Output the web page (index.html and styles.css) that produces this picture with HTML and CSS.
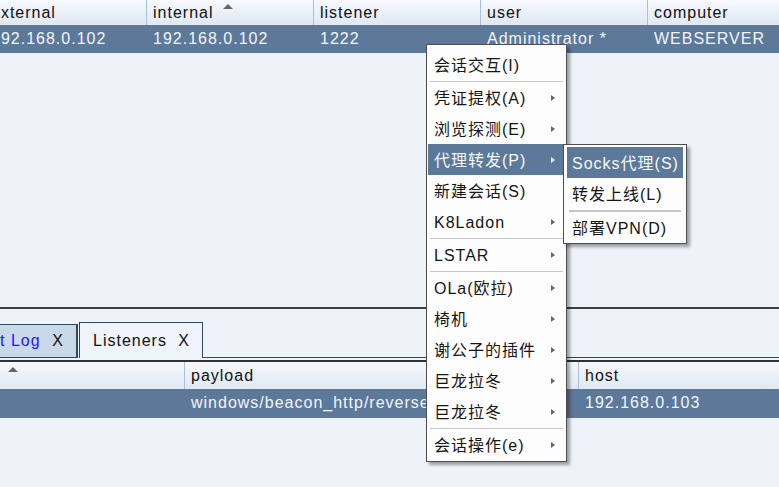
FILE: index.html
```html
<!DOCTYPE html>
<html lang="en">
<head>
    <meta charset="UTF-8">
    <title>Sessions</title>
    <link rel="stylesheet" href="styles.css">
</head>
<body>
    <!-- Sessions table -->
    <div class="top-pane">
        <div class="grid sessions">
            <div class="grid-head">
                <div class="cell first">external</div>
                <div class="cell">internal <span class="sort"></span></div>
                <div class="cell">listener</div>
                <div class="cell">user</div>
                <div class="cell">computer</div>
            </div>
            <div class="grid-row selected">
                <div class="cell first">192.168.0.102</div>
                <div class="cell">192.168.0.102</div>
                <div class="cell">1222</div>
                <div class="cell">Administrator *</div>
                <div class="cell">WEBSERVER</div>
            </div>
        </div>
    </div>

    <div class="split"></div>

    <!-- Tabs + listeners table -->
    <div class="bottom-pane">
        <div class="tabs">
            <div class="tab inactive"><span class="tab-title">t Log</span><span class="tab-close">X</span></div>
            <div class="tab active"><span class="tab-title">Listeners</span><span class="tab-close">X</span></div>
            <div class="tab-rest"></div>
        </div>
        <div class="grid listeners">
            <div class="grid-head">
                <div class="cell name"><span class="sort"></span></div>
                <div class="cell payload">payload</div>
                <div class="cell last">host</div>
            </div>
            <div class="grid-row selected">
                <div class="cell name"></div>
                <div class="cell payload">windows/beacon_http/reverse_http</div>
                <div class="cell last">192.168.0.103</div>
            </div>
        </div>
    </div>

    <!-- Context menu -->
    <div class="menu main-menu">
        <div class="item">会话交互(I)</div>
        <div class="sep"></div>
        <div class="item sub">凭证提权(A)</div>
        <div class="item sub">浏览探测(E)</div>
        <div class="item sub active">代理转发(P)</div>
        <div class="item">新建会话(S)</div>
        <div class="item sub">K8Ladon</div>
        <div class="sep"></div>
        <div class="item sub">LSTAR</div>
        <div class="sep"></div>
        <div class="item sub">OLa(欧拉)</div>
        <div class="item sub">椅机</div>
        <div class="item sub">谢公子的插件</div>
        <div class="item sub">巨龙拉冬</div>
        <div class="item sub">巨龙拉冬</div>
        <div class="sep"></div>
        <div class="item sub">会话操作(e)</div>
    </div>

    <div class="menu sub-menu">
        <div class="item active">Socks代理(S)</div>
        <div class="item">转发上线(L)</div>
        <div class="sep"></div>
        <div class="item">部署VPN(D)</div>
    </div>
</body>
</html>
```

FILE: styles.css
```css
* {
    margin: 0;
    padding: 0;
    box-sizing: border-box;
}

body {
    font-family: 'Liberation Sans', Arial, 'Noto Sans CJK SC', sans-serif;
    font-size: 16px;
    letter-spacing: 1px;
    background: #eef2f9;
    color: #111;
    width: 779px;
    height: 487px;
    overflow: hidden;
    position: relative;
}

/* Tables */
.grid {
    white-space: nowrap;
}

.grid-head,
.grid-row {
    display: flex;
}

.grid-head {
    height: 25px;
    background: linear-gradient(#f7f9fd, #dfe8f3);
}

.grid-head .cell {
    border-right: 1px solid #a9c0d9;
    line-height: 25px;
}

.grid-head .cell.last {
    border-right: none;
}

.grid-row {
    height: 28px;
}

.grid-row .cell {
    line-height: 28px;
}

.grid-row.selected {
    background: #5d7999;
    color: #f2f5f9;
}

.cell {
    flex: none;
    width: 167px;
    padding-left: 6px;
    overflow: hidden;
}

.sort {
    display: inline-block;
    width: 0;
    height: 0;
    margin-left: 4px;
    border-left: 5px solid transparent;
    border-right: 5px solid transparent;
    border-bottom: 5px solid #666;
    vertical-align: 9px;
}

/* Top pane */
.top-pane {
    height: 307px;
    overflow: hidden;
}

.sessions {
    margin-left: -15px;
}

.sessions .cell.first {
    width: 162px;
}

.split {
    height: 2px;
    background: #3c3f44;
}

/* Bottom pane */
.bottom-pane {
    padding-top: 13px;
}

.tabs {
    display: flex;
    align-items: flex-end;
    height: 36px;
}

.tab {
    display: flex;
    align-items: center;
    height: 35px;
    padding: 0 12px 0 13px;
    border: 1px solid #34475e;
    border-bottom: none;
}

.tab.inactive {
    height: 34px;
    width: 78px;
    padding-left: 0;
    background: #c9d9ea;
    border-left: none;
    border-bottom: 1px solid #34475e;
    border-right-width: 2px;
}

.tab.inactive .tab-title {
    color: #1a1aff;
}

.tab.active {
    margin-left: 1px;
    width: 124px;
    background: #eff3fa;
    height: 36px;
}

.tab-title {
    flex: 1;
}

.tab-close {
    padding-left: 4px;
}

.tab-rest {
    flex: 1;
    border-bottom: 1px solid #34475e;
}

.listeners {
    margin-top: 2px;
    border-top: 2px solid #303236;
}

.listeners .grid-head {
    height: 27px;
}

.listeners .grid-head .cell {
    line-height: 27px;
}

.listeners .grid-row {
    height: 29px;
}

.listeners .cell.name {
    width: 185px;
}

.listeners .cell.name .sort {
    margin-left: 2px;
}

.listeners .cell.payload {
    width: 394px;
}

.listeners .cell.last {
    width: 200px;
}

/* Context menu */
.menu {
    position: absolute;
    background: #fdfdfe;
    border: 1px solid #4e4e4e;
    box-shadow: 3px 3px 3px rgba(0, 0, 0, 0.35);
    white-space: nowrap;
}

.main-menu {
    left: 426px;
    top: 44px;
    width: 141px;
    padding: 4px 1px 1px;
}

.sub-menu {
    left: 563px;
    top: 144px;
    width: 124px;
    padding: 2px 3px 0;
}

.item {
    position: relative;
    height: 31px;
    line-height: 29px;
    padding: 2px 0 0 6px;
    color: #151515;
}

.sub-menu .item {
    padding-left: 5px;
}

.item.active {
    background: #5d7999;
    color: #f5f7fa;
}

.item.sub::after {
    content: '';
    position: absolute;
    right: 10px;
    top: 13px;
    border-top: 3px solid transparent;
    border-bottom: 3px solid transparent;
    border-left: 4px solid #666;
}

.item.active.sub::after {
    border-left-color: #e8ecf2;
}

.sep {
    height: 2px;
    border-top: 1px solid #ffffff;
    border-bottom: 1px solid #c6c6c6;
    margin: 0 2px;
}

.sub-menu .sep {
    height: 3px;
    border-bottom-width: 2px;
}
```
